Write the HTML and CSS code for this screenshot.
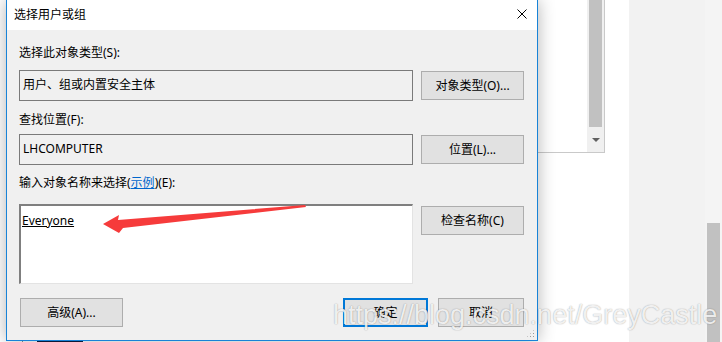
FILE: index.html
```html
<!DOCTYPE html>
<html lang="zh-CN">
<head>
  <meta charset="UTF-8">
  <title>选择用户或组</title>
  <link rel="stylesheet" href="styles.css">
</head>
<body>

  <div class="screen">
    <div class="left-col">
      <div class="dialog">
        <div class="titlebar">
          <span class="title">选择用户或组</span>
          <svg class="close" width="10" height="10" viewBox="0 0 10 10">
            <path d="M0.5 0.5 L9.5 9.5 M9.5 0.5 L0.5 9.5" stroke="#000" stroke-width="1" fill="none"/>
          </svg>
        </div>

        <div class="body">
          <div class="label label-1">选择此对象类型(S):</div>
          <div class="row row-1">
            <div class="field">用户、组或内置安全主体</div>
            <button class="btn side-btn">对象类型(O)...</button>
          </div>

          <div class="label label-2">查找位置(F):</div>
          <div class="row row-2">
            <div class="field">LHCOMPUTER</div>
            <button class="btn side-btn">位置(L)...</button>
          </div>

          <div class="label label-3">输入对象名称来选择(<a class="link">示例</a>)(E):</div>
          <div class="row row-3">
            <div class="names"><span class="name">Everyone</span></div>
            <button class="btn side-btn check-btn">检查名称(C)</button>
          </div>

          <div class="footer">
            <button class="btn adv-btn">高级(A)...</button>
            <div class="spacer"></div>
            <button class="btn ok-btn">确定</button>
            <button class="btn cancel-btn">取消</button>
          </div>
          <div class="grip"></div>
        </div>
      </div>
      <div class="under">
        <span class="under-line"></span>
        <span class="under-dark"></span>
      </div>
    </div>

    <div class="behind">
      <div class="pane-white">
        <div class="listbox">
          <div class="lb-track">
            <div class="lb-thumb"></div>
            <div class="lb-arrow"></div>
          </div>
        </div>
      </div>
      <div class="pane-grey">
        <div class="vtrack"><div class="vthumb"></div></div>
      </div>
    </div>

    <svg class="pointer" width="722" height="342" viewBox="0 0 722 342">
      <polygon points="103,224 119,215 118,220 305,205 306,207 123,228 119,233" fill="#f63b3b"/>
    </svg>

    <div class="watermark">https://blog.csdn.net/GreyCastle</div>
  </div>

</body>
</html>
```

FILE: styles.css
```css
body {
  margin: 0;
  padding: 0;
  background-color: #ffffff;
  font-family: "Noto Sans", "Noto Sans CJK SC", sans-serif;
  font-size: 12px;
  color: #000;
  overflow: hidden;
}

.screen {
  position: relative;
  width: 722px;
  height: 342px;
  display: flex;
  overflow: hidden;
}

.left-col {
  width: 532px;
  padding-left: 6px;
  display: flex;
  flex-direction: column;
  position: relative;
  z-index: 2;
}

.dialog {
  height: 341px;
  box-sizing: border-box;
  border: 1px solid #1883d7;
  border-top: none;
  display: flex;
  flex-direction: column;
  box-shadow: 0 0 16px rgba(0, 0, 0, 0.3);
}

.titlebar {
  height: 30px;
  background-color: #fff;
  padding-left: 7px;
  display: flex;
  align-items: center;
  justify-content: space-between;
}

.title {
  line-height: 16px;
  margin-top: -1px;
}

.close {
  margin-right: 10px;
  margin-top: -2px;
}

.body {
  flex: 1;
  position: relative;
  background-color: #f0f0f0;
  padding: 15px 13px 0 12px;
  display: flex;
  flex-direction: column;
}

.label {
  line-height: 16px;
  height: 16px;
  white-space: nowrap;
}

.label-2 { margin-top: 11px; }
.label-3 { margin-top: 10px; }

.link {
  color: #0066cc;
  text-decoration: underline;
}

.row {
  display: flex;
  align-items: center;
}

.row-1 { margin-top: 9px; }
.row-2 { margin-top: 6px; }
.row-3 { margin-top: 13px; align-items: flex-start; }

.field {
  width: 394px;
  height: 31px;
  box-sizing: border-box;
  border: 1px solid #7a7a7a;
  background-color: #f0f0f0;
  padding: 6px 3px 0 3px;
  line-height: 16px;
}

.names {
  width: 394px;
  height: 80px;
  box-sizing: border-box;
  border-style: solid;
  border-width: 2px 1px 1px 2px;
  border-color: #7f7f7f #e3e3e3 #e3e3e3 #7f7f7f;
  background-color: #fff;
  padding: 7px 2px 0 1px;
  line-height: 16px;
}

.name {
  text-decoration: underline;
}

.btn {
  font-family: "Noto Sans", "Noto Sans CJK SC", sans-serif;
  font-size: 12px;
  color: #000;
  height: 29px;
  box-sizing: border-box;
  background-color: #e1e1e1;
  border: 1px solid #adadad;
  padding: 0;
  line-height: 16px;
  cursor: pointer;
}

.side-btn {
  width: 103px;
  margin-left: 8px;
}

.check-btn {
  margin-top: 2px;
}

.footer {
  display: flex;
  margin-top: 14px;
}

.spacer { flex: 1; }

.adv-btn {
  width: 103px;
  margin-left: 1px;
}

.ok-btn {
  width: 85px;
  border: 2px solid #0078d7;
}

.cancel-btn {
  width: 86px;
  margin-left: 10px;
}

.grip {
  position: absolute;
  right: 2px;
  bottom: 2px;
  width: 9px;
  height: 9px;
  background-image: radial-gradient(circle, #9a9a9a 0.9px, transparent 1px);
  background-size: 3px 3px;
  clip-path: polygon(100% 0, 100% 100%, 0 100%);
}

.under {
  height: 1px;
  display: flex;
}

.under-line {
  width: 1px;
  margin-left: 16px;
  background-color: #7a7a7a;
}

.under-dark {
  width: 46px;
  margin-left: 14px;
  background-color: #0b1a3a;
}

.behind {
  flex: 1;
  display: flex;
}

.pane-white {
  width: 91px;
  background-color: #fff;
}

.listbox {
  width: 66px;
  height: 152px;
  border-right: 1px solid #c9c9c9;
  border-bottom: 1px solid #c9c9c9;
  display: flex;
  justify-content: flex-end;
}

.lb-track {
  width: 17px;
  background-color: #f0f0f0;
  display: flex;
  flex-direction: column;
  align-items: center;
}

.lb-thumb {
  width: 13px;
  height: 127px;
  background-color: #c1c1c1;
}

.lb-arrow {
  margin-top: 11px;
  width: 0;
  height: 0;
  border-left: 4px solid transparent;
  border-right: 4px solid transparent;
  border-top: 4px solid #606060;
}

.pane-grey {
  flex: 1;
  background-color: #f2f2f2;
  display: flex;
  justify-content: flex-end;
}

.vtrack {
  width: 17px;
  background-color: #f4f4f4;
  display: flex;
  flex-direction: column;
  justify-content: flex-end;
  align-items: center;
}

.vthumb {
  width: 13px;
  height: 119px;
  background-color: #c1c1c1;
}

.pointer {
  position: absolute;
  left: 0;
  top: 0;
  z-index: 3;
  pointer-events: none;
}

.watermark {
  position: absolute;
  left: 333px;
  top: 302px;
  z-index: 4;
  font-family: "Liberation Sans", Arial, sans-serif;
  font-size: 27px;
  line-height: 27px;
  color: rgba(255, 255, 255, 0.85);
  text-shadow: 0 0 1px rgba(0, 0, 0, 0.3), 0 0 2px rgba(0, 0, 0, 0.12);
  white-space: nowrap;
  pointer-events: none;
}
```
